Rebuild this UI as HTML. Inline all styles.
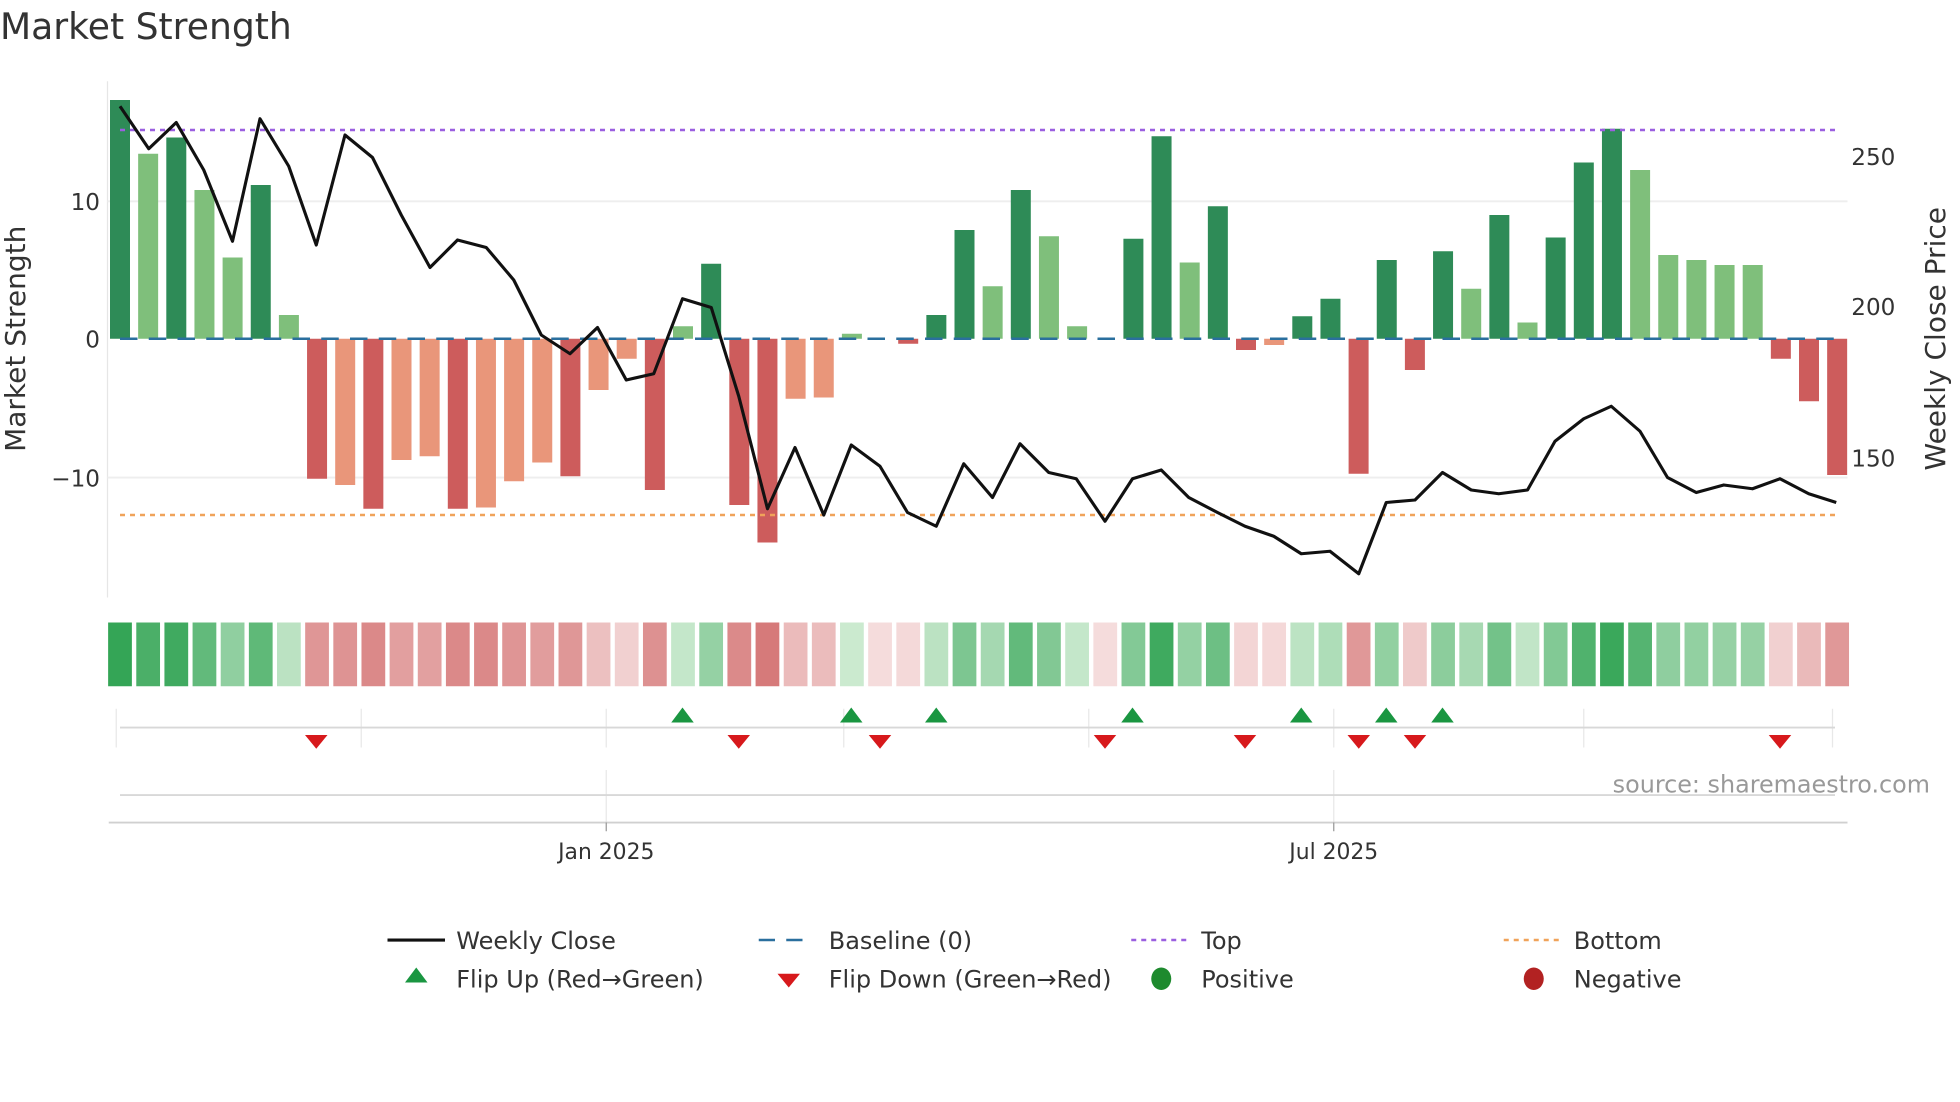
<!DOCTYPE html>
<html><head><meta charset="utf-8"><style>
html,body{margin:0;padding:0;background:#fff;}
svg{display:block;font-family:"DejaVu Sans","Liberation Sans",sans-serif;}
</style></head><body>
<svg id="s" width="1960" height="1102" viewBox="0 0 1568 881.6" xmlns="http://www.w3.org/2000/svg">
<rect width="1568" height="881.6" fill="#fff"/>
<text x="0" y="31" font-size="28.9" fill="#333">Market Strength</text>
<line x1="86" y1="65" x2="86" y2="478" stroke="#e6e6e6" stroke-width="1"/>
<line x1="86" y1="161" x2="1478" y2="161" stroke="#eeeeee" stroke-width="1.5"/>
<line x1="86" y1="382" x2="1478" y2="382" stroke="#eeeeee" stroke-width="1.5"/>
<g font-size="18.5" fill="#333" text-anchor="end">
<text x="80" y="168">10</text><text x="80" y="278">0</text><text x="80" y="389">−10</text>
</g>
<g font-size="18.5" fill="#333">
<text x="1481" y="132">250</text><text x="1481" y="252">200</text><text x="1481" y="373">150</text>
</g>
<text transform="translate(20,271) rotate(-90)" font-size="22.4" fill="#333" text-anchor="middle">Market Strength</text>
<text transform="translate(1556,271) rotate(-90)" font-size="22.4" fill="#333" text-anchor="middle">Weekly Close Price</text>
<g id="bars"></g>
<line x1="96" y1="271" x2="1468" y2="271" stroke="#2a6f9e" stroke-width="2" stroke-dasharray="14,9"/>
<line x1="96" y1="104" x2="1468" y2="104" stroke="#9b5fe0" stroke-width="2" stroke-dasharray="4,4"/>
<line x1="96" y1="412" x2="1468" y2="412" stroke="#f0a35a" stroke-width="2" stroke-dasharray="4,4"/>
<polyline id="pl" fill="none" stroke="#111" stroke-width="2.5" stroke-linejoin="round"/>
<g id="heat"></g>
<g stroke="#e8e8e8" stroke-width="1">
<line x1="93" y1="567" x2="93" y2="598"/><line x1="289" y1="567" x2="289" y2="598"/><line x1="485" y1="567" x2="485" y2="598"/><line x1="675" y1="567" x2="675" y2="598"/><line x1="871" y1="567" x2="871" y2="598"/><line x1="1067" y1="567" x2="1067" y2="598"/><line x1="1267" y1="567" x2="1267" y2="598"/><line x1="1466" y1="567" x2="1466" y2="598"/>
<line x1="485" y1="616" x2="485" y2="658"/><line x1="1067" y1="616" x2="1067" y2="658"/>
</g>
<line x1="96" y1="582" x2="1468" y2="582" stroke="#d8d8d8" stroke-width="1.5"/>
<line x1="96" y1="636" x2="1468" y2="636" stroke="#d8d8d8" stroke-width="1.5"/>
<line x1="87" y1="658" x2="1478" y2="658" stroke="#d0d0d0" stroke-width="1.5"/>
<line x1="485" y1="658" x2="485" y2="665" stroke="#999" stroke-width="1"/>
<line x1="1067" y1="658" x2="1067" y2="665" stroke="#999" stroke-width="1"/>
<g id="mk"></g>
<text x="1544" y="634" font-size="19.1" fill="#999" text-anchor="end">source: sharemaestro.com</text>
<g font-size="17.5" fill="#333" text-anchor="middle"><text x="485" y="687">Jan 2025</text><text x="1067" y="687">Jul 2025</text></g>
<g font-size="19.2" fill="#333">
<line x1="310" y1="752" x2="356" y2="752" stroke="#111" stroke-width="2.5"/><text x="365" y="759">Weekly Close</text>
<line x1="607" y1="752" x2="651" y2="752" stroke="#2a6f9e" stroke-width="2" stroke-dasharray="13,9"/><text x="663" y="759">Baseline (0)</text>
<line x1="905" y1="752" x2="949" y2="752" stroke="#9b5fe0" stroke-width="2" stroke-dasharray="4,4"/><text x="961" y="759">Top</text>
<line x1="1203" y1="752" x2="1247" y2="752" stroke="#f0a35a" stroke-width="2" stroke-dasharray="4,4"/><text x="1259" y="759">Bottom</text>
<polygon points="333,774 342,786 324,786" fill="#1a9641"/><text x="365" y="790">Flip Up (Red→Green)</text>
<polygon points="622,779 640,779 631,790" fill="#d7191c"/><text x="663" y="790">Flip Down (Green→Red)</text>
<ellipse cx="929" cy="783" rx="8" ry="9" fill="#1e8a2e"/><text x="961" y="790">Positive</text>
<ellipse cx="1227" cy="783" rx="8" ry="9" fill="#b22222"/><text x="1259" y="790">Negative</text>
</g>
</svg>
<script>
var NS="http://www.w3.org/2000/svg";
function el(p,t,a){var e=document.createElementNS(NS,t);for(var k in a)e.setAttribute(k,a[k]);p.appendChild(e);return e;}
var tops=[80,123,110,152,206,148,252,383,388,407,368,365,407,406,385,370,381,312,287,392,261,211,404,434,319,318,267,271,275,252,184,229,152,189,261,271,191,109,210,165,280,276,253,239,379,208,296,201,231,172,258,190,130,103,136,204,208,212,212,287,321,380];
var cls=["d","l","d","l","l","d","l","D","s","D","s","s","D","s","s","s","D","s","s","D","l","d","D","D","s","s","l","","D","d","d","l","d","l","l","","d","d","l","d","D","s","d","d","D","d","D","d","l","d","l","d","d","d","l","l","l","l","l","D","D","D"];
var col={d:"#2e8b57",l:"#7fbf7b",D:"#cd5c5c",s:"#e9967a"};
var bars=document.getElementById("bars"),heat=document.getElementById("heat");
function mix(a,b,t){var r=[];for(var i=0;i<3;i++)r.push(Math.round(a[i]+(b[i]-a[i])*t));return "rgb("+r.join(",")+")";}
for(var i=0;i<62;i++){
 var cx=96+i*22.52,t=tops[i];
 if(cls[i]){var y=Math.min(t,271),h=Math.abs(t-271);if(h<2)h=2;
 el(bars,"rect",{x:cx-8,y:y,width:16,height:h,fill:col[cls[i]]});}
 var v=(271-t)/11,a=Math.min(Math.abs(v)/16,1);a=Math.pow(a,0.9);
 var c=v>0.05?mix([208,236,211],[52,165,86],a):mix([245,220,220],[212,115,115],a);
 el(heat,"rect",{x:cx-9.5,y:498,width:19,height:51,fill:c});
}
var pts="96,85 119,119 141,98 163,136 186,193 208,95 231,133 253,196 276,108 298,126 321,172 344,214 366,192 389,198 411,224 433,268 456,283 478,262 501,304 523,299 546,239 569,246 591,317 614,407 636,358 659,412 681,356 704,373 726,410 749,421 771,371 794,398 816,355 839,378 861,383 884,417 906,383 929,376 951,398 974,410 996,421 1019,429 1041,443 1064,441 1087,459 1109,402 1132,400 1154,378 1177,392 1199,395 1222,392 1244,353 1267,335 1289,325 1312,345 1334,382 1357,394 1379,388 1402,391 1424,383 1447,395 1469,402";
document.getElementById("pl").setAttribute("points",pts);
var mk=document.getElementById("mk");
[546,681,749,906,1041,1109,1154].forEach(function(x){el(mk,"polygon",{points:x+",566 "+(x+9)+",578 "+(x-9)+",578",fill:"#1a9641"});});
[253,591,704,884,996,1087,1132,1424].forEach(function(x){el(mk,"polygon",{points:(x-9)+",588 "+(x+9)+",588 "+x+",599",fill:"#d7191c"});});
</script>
</body></html>
